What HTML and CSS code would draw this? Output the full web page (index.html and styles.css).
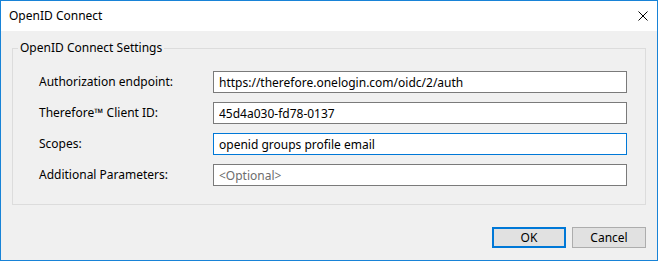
FILE: index.html
```html
<!DOCTYPE html>
<html lang="en">
<head>
    <meta charset="UTF-8">
    <title>OpenID Connect</title>
    <link rel="stylesheet" href="styles.css">
</head>
<body>
    <div class="dialog">
        <div class="title-bar">
            <span class="title">OpenID Connect</span>
            <button class="close-btn" aria-label="Close">
                <svg width="10" height="10" viewBox="0 0 10 10">
                    <path d="M0.5 0.5 L9.5 9.5 M9.5 0.5 L0.5 9.5" stroke="#000" stroke-width="1" fill="none"/>
                </svg>
            </button>
        </div>

        <div class="dialog-body">
            <fieldset class="group">
                <legend>OpenID Connect Settings</legend>
                <div class="form-grid">
                    <label class="field-label">Authorization endpoint:</label>
                    <input class="field" type="text" value="https://therefore.onelogin.com/oidc/2/auth">

                    <label class="field-label">Therefore™ Client ID:</label>
                    <input class="field" type="text" value="45d4a030-fd78-0137">

                    <label class="field-label">Scopes:</label>
                    <input class="field focused" type="text" value="openid groups profile email">

                    <label class="field-label">Additional Parameters:</label>
                    <input class="field" type="text" placeholder="<Optional>">
                </div>
            </fieldset>

            <div class="buttons">
                <button class="btn default">OK</button>
                <button class="btn">Cancel</button>
            </div>
        </div>
    </div>
</body>
</html>
```

FILE: styles.css
```css
:root {
    --accent: #0078d7;
    --frame: #1883d7;
    --face: #f0f0f0;
    --group-line: #dcdcdc;
    --input-line: #7a7a7a;
}

* {
    box-sizing: border-box;
}

body {
    margin: 0;
    font-family: "Noto Sans", "Open Sans", sans-serif;
    font-size: 12px;
    color: #000;
}

.dialog {
    width: 658px;
    height: 261px;
    border: 1px solid var(--frame);
    background: var(--face);
    display: flex;
    flex-direction: column;
}

/* Title bar */
.title-bar {
    height: 30px;
    background: #fff;
    display: flex;
    align-items: center;
    justify-content: space-between;
    padding: 0 9px 0 8px;
}

.title {
    font-size: 12px;
    line-height: 16px;
}

.close-btn {
    width: 10px;
    height: 10px;
    padding: 0;
    border: none;
    background: transparent;
    display: flex;
}

/* Body */
.dialog-body {
    flex: 1;
    padding: 9px 11px 0 11px;
    display: flex;
    flex-direction: column;
}

.group {
    margin: 0;
    border: 1px solid var(--group-line);
    padding: 15px 18px 18px 26px;
    min-width: 0;
}

.group legend {
    padding: 0 2px;
    margin-left: -21px;
    line-height: 16px;
}

.form-grid {
    display: grid;
    grid-template-columns: 174px 1fr;
    grid-auto-rows: 22px;
    row-gap: 9px;
    align-items: center;
}

.field-label {
    line-height: 16px;
}

.field {
    height: 22px;
    width: 100%;
    margin: 0;
    border: 1px solid var(--input-line);
    background: #fff;
    padding: 0 5px;
    font-family: inherit;
    font-size: 12px;
    color: #000;
    outline: none;
}

.field.focused {
    border-color: var(--accent);
}

.field::placeholder {
    color: #6d6d6d;
}

/* Buttons */
.buttons {
    margin-top: 22px;
    display: flex;
    justify-content: flex-end;
    gap: 6px;
}

.btn {
    width: 74px;
    height: 21px;
    padding: 0;
    background: #e1e1e1;
    border: 1px solid #adadad;
    font-family: inherit;
    font-size: 12px;
    color: #000;
}

.btn.default {
    border: 2px solid var(--accent);
}
```
